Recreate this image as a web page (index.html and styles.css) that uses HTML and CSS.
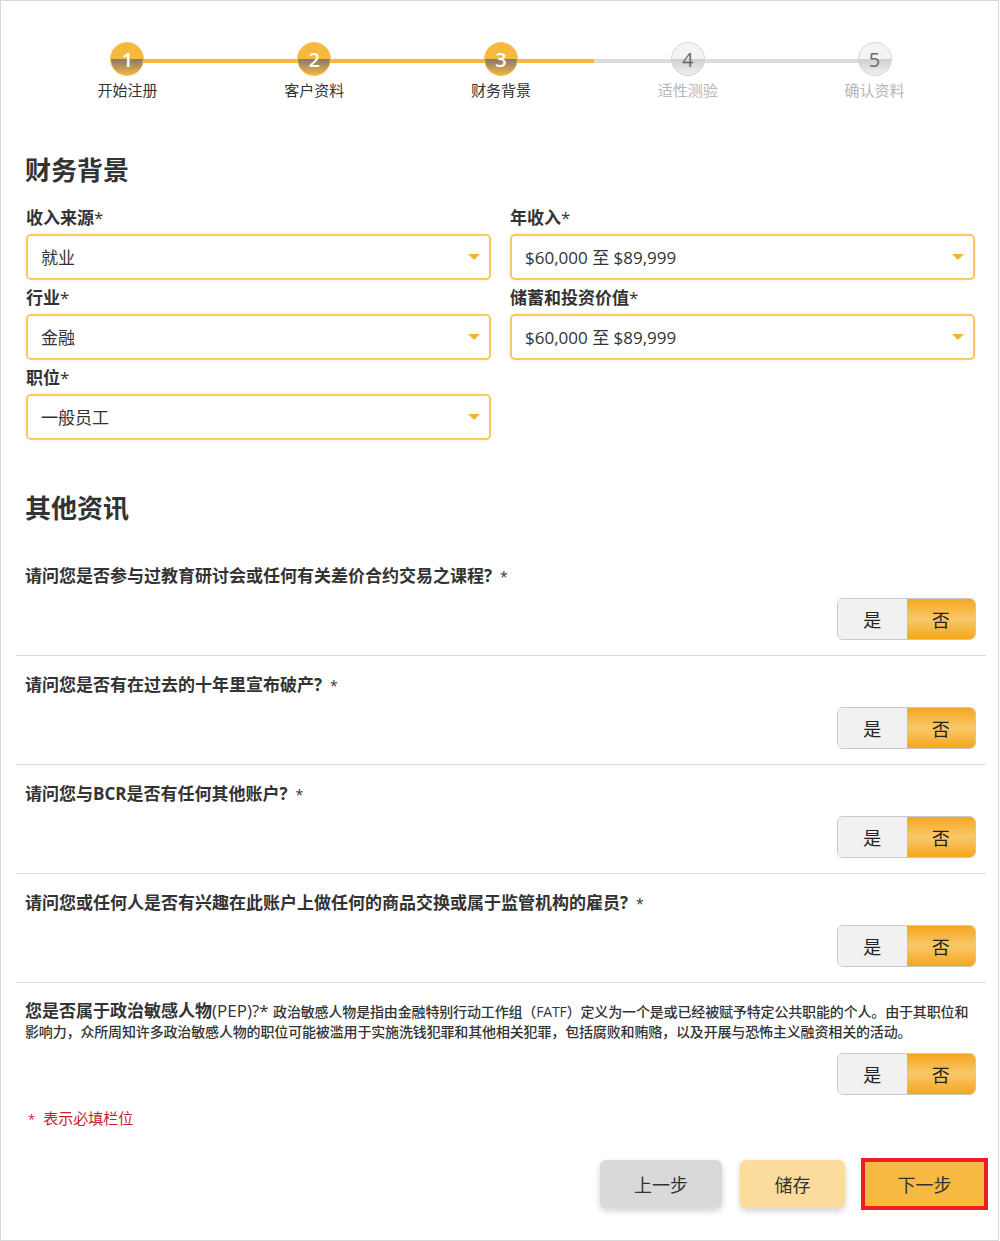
FILE: index.html
```html
<!DOCTYPE html>
<html>
<head>
  <meta charset="utf-8">
  <title>财务背景</title>
  <link rel="stylesheet" href="styles.css">
</head>
<body>
  <div class="page">
    <div class="stepper">
      <div class="step done">
        <div class="step-num">1</div>
        <div class="step-label">开始注册</div>
      </div>
      <div class="step done">
        <div class="step-num">2</div>
        <div class="step-label">客户资料</div>
      </div>
      <div class="step done">
        <div class="step-num">3</div>
        <div class="step-label">财务背景</div>
      </div>
      <div class="step next">
        <div class="step-num">4</div>
        <div class="step-label">适性测验</div>
      </div>
      <div class="step">
        <div class="step-num">5</div>
        <div class="step-label">确认资料</div>
      </div>
    </div>

    <h2 class="section-title">财务背景</h2>
    <div class="field-grid">
      <div class="field">
        <label>收入来源<span class="star">*</span></label>
        <div class="select"><span>就业</span><i class="caret"></i></div>
      </div>
      <div class="field">
        <label>年收入<span class="star">*</span></label>
        <div class="select"><span>$60,000 至 $89,999</span><i class="caret"></i></div>
      </div>
      <div class="field">
        <label>行业<span class="star">*</span></label>
        <div class="select"><span>金融</span><i class="caret"></i></div>
      </div>
      <div class="field">
        <label>储蓄和投资价值<span class="star">*</span></label>
        <div class="select"><span>$60,000 至 $89,999</span><i class="caret"></i></div>
      </div>
      <div class="field">
        <label>职位<span class="star">*</span></label>
        <div class="select"><span>一般员工</span><i class="caret"></i></div>
      </div>
    </div>

    <h2 class="section-title other">其他资讯</h2>
    <div class="questions">
      <div class="question">
        <p class="q-text">请问您是否参与过教育研讨会或任何有关差价合约交易之课程?<span class="q-star">*</span></p>
        <div class="toggle-row">
          <div class="toggle"><span class="opt">是</span><span class="opt on">否</span></div>
        </div>
      </div>
      <div class="question">
        <p class="q-text">请问您是否有在过去的十年里宣布破产?<span class="q-star">*</span></p>
        <div class="toggle-row">
          <div class="toggle"><span class="opt">是</span><span class="opt on">否</span></div>
        </div>
      </div>
      <div class="question">
        <p class="q-text">请问您与BCR是否有任何其他账户?<span class="q-star">*</span></p>
        <div class="toggle-row">
          <div class="toggle"><span class="opt">是</span><span class="opt on">否</span></div>
        </div>
      </div>
      <div class="question">
        <p class="q-text">请问您或任何人是否有兴趣在此账户上做任何的商品交换或属于监管机构的雇员?<span class="q-star">*</span></p>
        <div class="toggle-row">
          <div class="toggle"><span class="opt">是</span><span class="opt on">否</span></div>
        </div>
      </div>
      <div class="question last">
        <p class="q-text long">您是否属于政治敏感人物<span class="plain">(PEP)?*</span> <small>政治敏感人物是指由金融特别行动工作组（FATF）定义为一个是或已经被赋予特定公共职能的个人。由于其职位和影响力，众所周知许多政治敏感人物的职位可能被滥用于实施洗钱犯罪和其他相关犯罪，包括腐败和贿赂，以及开展与恐怖主义融资相关的活动。</small></p>
        <div class="toggle-row">
          <div class="toggle"><span class="opt">是</span><span class="opt on">否</span></div>
        </div>
      </div>
    </div>

    <p class="required-note"><span class="note-star">*</span>表示必填栏位</p>

    <div class="actions">
      <button class="btn btn-back">上一步</button>
      <button class="btn btn-save">储存</button>
      <button class="btn btn-next">下一步</button>
    </div>
  </div>
</body>
</html>
```

FILE: styles.css
```css
* {
  box-sizing: border-box;
}
body {
  margin: 0;
  font-family: "Open Sans", "Noto Sans CJK SC", sans-serif;
  color: #333;
  background: #fff;
}
.page {
  width: 999px;
  height: 1241px;
  border: 1px solid #d9d9d9;
  padding: 41px 12px 0 15px;
}

/* stepper */
.stepper {
  display: flex;
  margin: 0 18px;
}
.step {
  flex: 1;
  position: relative;
  text-align: center;
}
.step + .step::before {
  content: "";
  position: absolute;
  top: 17px;
  left: -50%;
  width: 100%;
  height: 4px;
  background: #dcdcdc;
  z-index: 0;
}
.step.done + .step.done::before {
  background: #f7b73c;
}
.step.next::before {
  background: linear-gradient(to right, #f7b73c 50%, #dcdcdc 50%);
}
.step-num {
  position: relative;
  z-index: 1;
  width: 34px;
  height: 34px;
  margin: 0 auto;
  border-radius: 50%;
  border: 1px solid #d6d6d6;
  background: linear-gradient(to bottom, #f4f4f4 0%, #f4f4f4 50%, #cfcfcf 50%, #f0f0f0 100%);
  color: #6a6a6a;
  font-size: 20px;
  line-height: 33px;
}
.step.done .step-num {
  border-color: #f6c159;
  background: linear-gradient(to bottom, #f7b83f 0%, #f7b83f 50%, #817a70 50%, #f4b53f 100%);
  color: #fff;
  font-weight: 600;
}
.step-label {
  margin-top: 4px;
  font-size: 15px;
  line-height: 20px;
  color: #b2b6bd;
}
.step.done .step-label {
  color: #333;
}

/* sections */
.section-title {
  margin: 52px 0 18px 9px;
  font-size: 26px;
  line-height: 36px;
  font-weight: bold;
  color: #333;
}
.section-title.other {
  margin: 50px 0 21px 9px;
}
.field-grid {
  display: grid;
  grid-template-columns: 465px 465px;
  column-gap: 19px;
  row-gap: 6px;
  padding-left: 10px;
}
.field label {
  display: block;
  font-size: 17px;
  line-height: 24px;
  font-weight: bold;
  margin-bottom: 4px;
}
.star {
  font-weight: normal;
}
.select {
  display: flex;
  align-items: center;
  justify-content: space-between;
  height: 46px;
  padding: 0 9px 2px 13px;
  border: 2px solid #fac765;
  border-radius: 5px;
  box-shadow: 0 0 2px rgba(250, 199, 101, 0.6);
  font-size: 17px;
  color: #333;
}
.caret {
  width: 0;
  height: 0;
  margin-top: 2px;
  border-left: 6px solid transparent;
  border-right: 6px solid transparent;
  border-top: 6px solid #f5b335;
}

/* questions */
.question {
  padding: 15px 10px 15px 9px;
  border-bottom: 1px solid #dddddd;
}
.question.last {
  border-bottom: none;
  padding-bottom: 13px;
}
.q-text {
  margin: 0;
  height: 24px;
  padding-top: 2px;
  font-size: 17px;
  line-height: 24px;
  font-weight: bold;
  color: #333;
}
.q-star {
  font-weight: normal;
  font-size: 14px;
  line-height: 1;
  margin-left: 8px;
}
.q-text.long {
  height: 40px;
  margin-top: 3px;
  padding-top: 0;
  line-height: 20px;
}
.q-text .plain {
  font-weight: normal;
}
.q-text small {
  font-size: 14px;
  line-height: 1;
  font-weight: 500;
  letter-spacing: -0.15px;
  color: #333;
}
.toggle-row {
  display: flex;
  justify-content: flex-end;
  margin-top: 12px;
}
.toggle {
  display: flex;
  width: 139px;
  height: 42px;
  border: 1px solid #c9c9c9;
  border-radius: 6px;
  overflow: hidden;
}
.opt {
  flex: 1;
  display: flex;
  align-items: center;
  justify-content: center;
  font-size: 18px;
  color: #222;
  background: #f1f1f1;
}
.opt.on {
  background: linear-gradient(to bottom, #f6a71f 0%, #f9c869 50%, #f5a61c 100%);
}

/* footer */
.required-note {
  margin: 0;
  padding-left: 12px;
  font-size: 15px;
  line-height: 20px;
  color: #c81e32;
}
.note-star {
  margin-right: 8px;
  font-size: 13px;
}
.actions {
  display: flex;
  justify-content: flex-end;
  align-items: center;
  margin: 29px -2px 0 0;
}
.btn {
  height: 48px;
  border: none;
  border-radius: 6px;
  font-family: "Open Sans", "Noto Sans CJK SC", sans-serif;
  font-size: 18px;
  color: #333;
  cursor: pointer;
  box-shadow: 0 3px 6px rgba(0, 0, 0, 0.18);
}
.btn-back {
  width: 122px;
  background: #d9d9d9;
}
.btn-save {
  width: 105px;
  margin-left: 18px;
  background: #fbdc9c;
}
.btn-next {
  width: 127px;
  height: 52px;
  margin-left: 16px;
  border: 4px solid #ee1d24;
  border-radius: 0;
  background: #f7b941;
  box-shadow: none;
}
```
